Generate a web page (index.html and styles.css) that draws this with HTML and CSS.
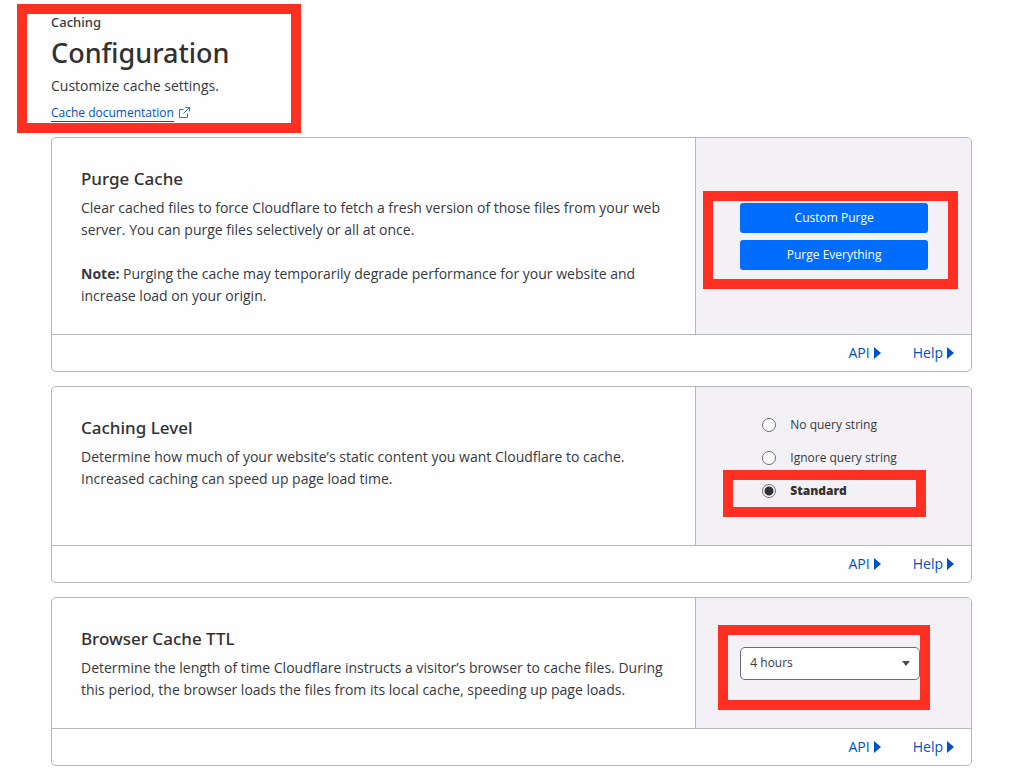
FILE: index.html
```html
<!DOCTYPE html>
<html lang="en">
<head>
  <meta charset="UTF-8" />
  <meta name="viewport" content="width=device-width, initial-scale=1.0"/>
  <title>Caching | Configuration</title>
  <link rel="stylesheet" href="styles.css">
</head>
<body>
  <main class="page">
    <header class="page-header marked">
      <p class="section-name">Caching</p>
      <h1>Configuration</h1>
      <p class="intro">Customize cache settings.</p>
      <a class="doc-link" href="#docs"><span>Cache documentation</span>
        <svg width="11" height="11" viewBox="0 0 11 11" fill="none" stroke="currentColor" aria-hidden="true"><path d="M4.5 2.5h-4v8h8v-4M6.5.5h4v4M10.5.5L4.5 6.5"/></svg>
      </a>
    </header>

    <section class="card">
      <div class="card-main">
        <div class="card-text">
          <h2>Purge Cache</h2>
          <p>Clear cached files to force Cloudflare to fetch a fresh version of those files from your web server. You can purge files selectively or all at once.</p>
          <p><strong>Note:</strong> Purging the cache may temporarily degrade performance for your website and increase load on your origin.</p>
        </div>
        <div class="card-side">
          <div class="buttons marked">
            <button type="button">Custom Purge</button>
            <button type="button">Purge Everything</button>
          </div>
        </div>
      </div>
      <footer class="card-footer">
        <a href="#api">API<svg width="7" height="12" viewBox="0 0 7 12" aria-hidden="true"><path d="M0 0l7 6-7 6z" fill="currentColor"/></svg></a>
        <a href="#help">Help<svg width="7" height="12" viewBox="0 0 7 12" aria-hidden="true"><path d="M0 0l7 6-7 6z" fill="currentColor"/></svg></a>
      </footer>
    </section>

    <section class="card">
      <div class="card-main">
        <div class="card-text">
          <h2>Caching Level</h2>
          <p>Determine how much of your website’s static content you want Cloudflare to cache. Increased caching can speed up page load time.</p>
        </div>
        <div class="card-side">
          <div class="options">
            <label class="option"><input type="radio" name="level" value="none"><span>No query string</span></label>
            <label class="option"><input type="radio" name="level" value="ignore"><span>Ignore query string</span></label>
            <label class="option marked"><input type="radio" name="level" value="standard" checked><span>Standard</span></label>
          </div>
        </div>
      </div>
      <footer class="card-footer">
        <a href="#api">API<svg width="7" height="12" viewBox="0 0 7 12" aria-hidden="true"><path d="M0 0l7 6-7 6z" fill="currentColor"/></svg></a>
        <a href="#help">Help<svg width="7" height="12" viewBox="0 0 7 12" aria-hidden="true"><path d="M0 0l7 6-7 6z" fill="currentColor"/></svg></a>
      </footer>
    </section>

    <section class="card">
      <div class="card-main">
        <div class="card-text">
          <h2 id="ttl-title">Browser Cache TTL</h2>
          <p>Determine the length of time Cloudflare instructs a visitor’s browser to cache files. During this period, the browser loads the files from its local cache, speeding up page loads.</p>
        </div>
        <div class="card-side">
          <div class="select-box marked">
            <select aria-labelledby="ttl-title">
              <option>4 hours</option>
            </select>
            <svg class="arrow" width="8" height="5" viewBox="0 0 8 5" aria-hidden="true"><path d="M0 0h8L4 5z" fill="currentColor"/></svg>
          </div>
        </div>
      </div>
      <footer class="card-footer">
        <a href="#api">API<svg width="7" height="12" viewBox="0 0 7 12" aria-hidden="true"><path d="M0 0l7 6-7 6z" fill="currentColor"/></svg></a>
        <a href="#help">Help<svg width="7" height="12" viewBox="0 0 7 12" aria-hidden="true"><path d="M0 0l7 6-7 6z" fill="currentColor"/></svg></a>
      </footer>
    </section>
  </main>
</body>
</html>
```
FILE: styles.css
```css
*, *::after { box-sizing: border-box; }
body { margin: 0; background: #fefefe; color: #36393f; font: 14px/22px "Open Sans", "Noto Sans", sans-serif; }
h1, h2, p { margin: 0; }
a { color: #0051c3; text-decoration: none; }
.page { padding: 12px 48px 10px 51px; }

/* red highlight frames */
.marked { position: relative; }
.marked::after { content: ""; position: absolute; border: 10px solid #ff3022; pointer-events: none; }
.page-header.marked::after { top: -8px; left: -34px; width: 284px; bottom: -8px; }
.buttons.marked::after { top: -12px; left: -37px; right: -30px; bottom: -19px; }
.option.marked::after { top: -4px; left: -39px; width: 203px; bottom: -10px; }
.select-box.marked::after { top: -22px; left: -22px; right: -10px; bottom: -30px; }

.page-header { margin-bottom: 12px; }
.section-name { font: 500 13px/20px "Noto Sans", sans-serif; }
h1 { font: 500 27px/42px "Noto Sans", sans-serif; color: #313131; }
.intro { line-height: 24px; }
.doc-link { display: flex; align-items: center; gap: 5px; padding: 5px 0 3px; font-size: 12px; line-height: 19px; }
.doc-link span { height: 19px; border-bottom: 1px solid #0051c3; }
.doc-link svg { color: #2c7cb0; }

.card { border: 1px solid #b6b7b9; border-radius: 5px; margin-bottom: 14px; background: #fefefe; overflow: hidden; }
.card-main { display: grid; grid-template-columns: 7fr 3fr; border-bottom: 1px solid #b6b7b9; }
.card-text { padding: 29px 28px 27px 29px; }
.card-text p + p { margin-top: 22px; }
h2 { font: 500 17px/24px "Noto Sans", sans-serif; color: #313131; margin-bottom: 6px; }
.card-side { border-left: 1px solid #b6b7b9; background: #f3f1f5; padding: 0 43px 0 44px; display: flex; align-items: center; }

.buttons { flex: 1; display: grid; gap: 7px; }
button { height: 30px; border: 0; border-radius: 3px; background: #006dff; color: #fff; font: 12px/20px "Open Sans", "Noto Sans", sans-serif; cursor: pointer; }

.options { padding: 21px 0 38px 22px; }
.option { display: flex; align-items: center; gap: 14px; height: 33px; font-size: 12px; }
.option input { appearance: none; width: 14px; height: 14px; margin: 0; border: 1px solid #6b6b70; border-radius: 50%; background: #fff; }
.option input:checked { background: radial-gradient(circle, #313131 4px, #fff 5px); }
.option input:checked + span { font-weight: 800; color: #313131; }

.select-box { width: 180px; }
select { appearance: none; display: block; width: 100%; height: 33px; padding: 0 9px; border: 1px solid #6b6b70; border-radius: 5px; background: #fff; color: #36393f; font: 12px/20px "Open Sans", "Noto Sans", sans-serif; }
.arrow { position: absolute; right: 10px; top: 14px; color: #4a4a4f; }

.card-footer { display: flex; justify-content: flex-end; gap: 32px; padding: 7px 17px; }
.card-footer a { display: flex; align-items: center; gap: 4px; }
```
